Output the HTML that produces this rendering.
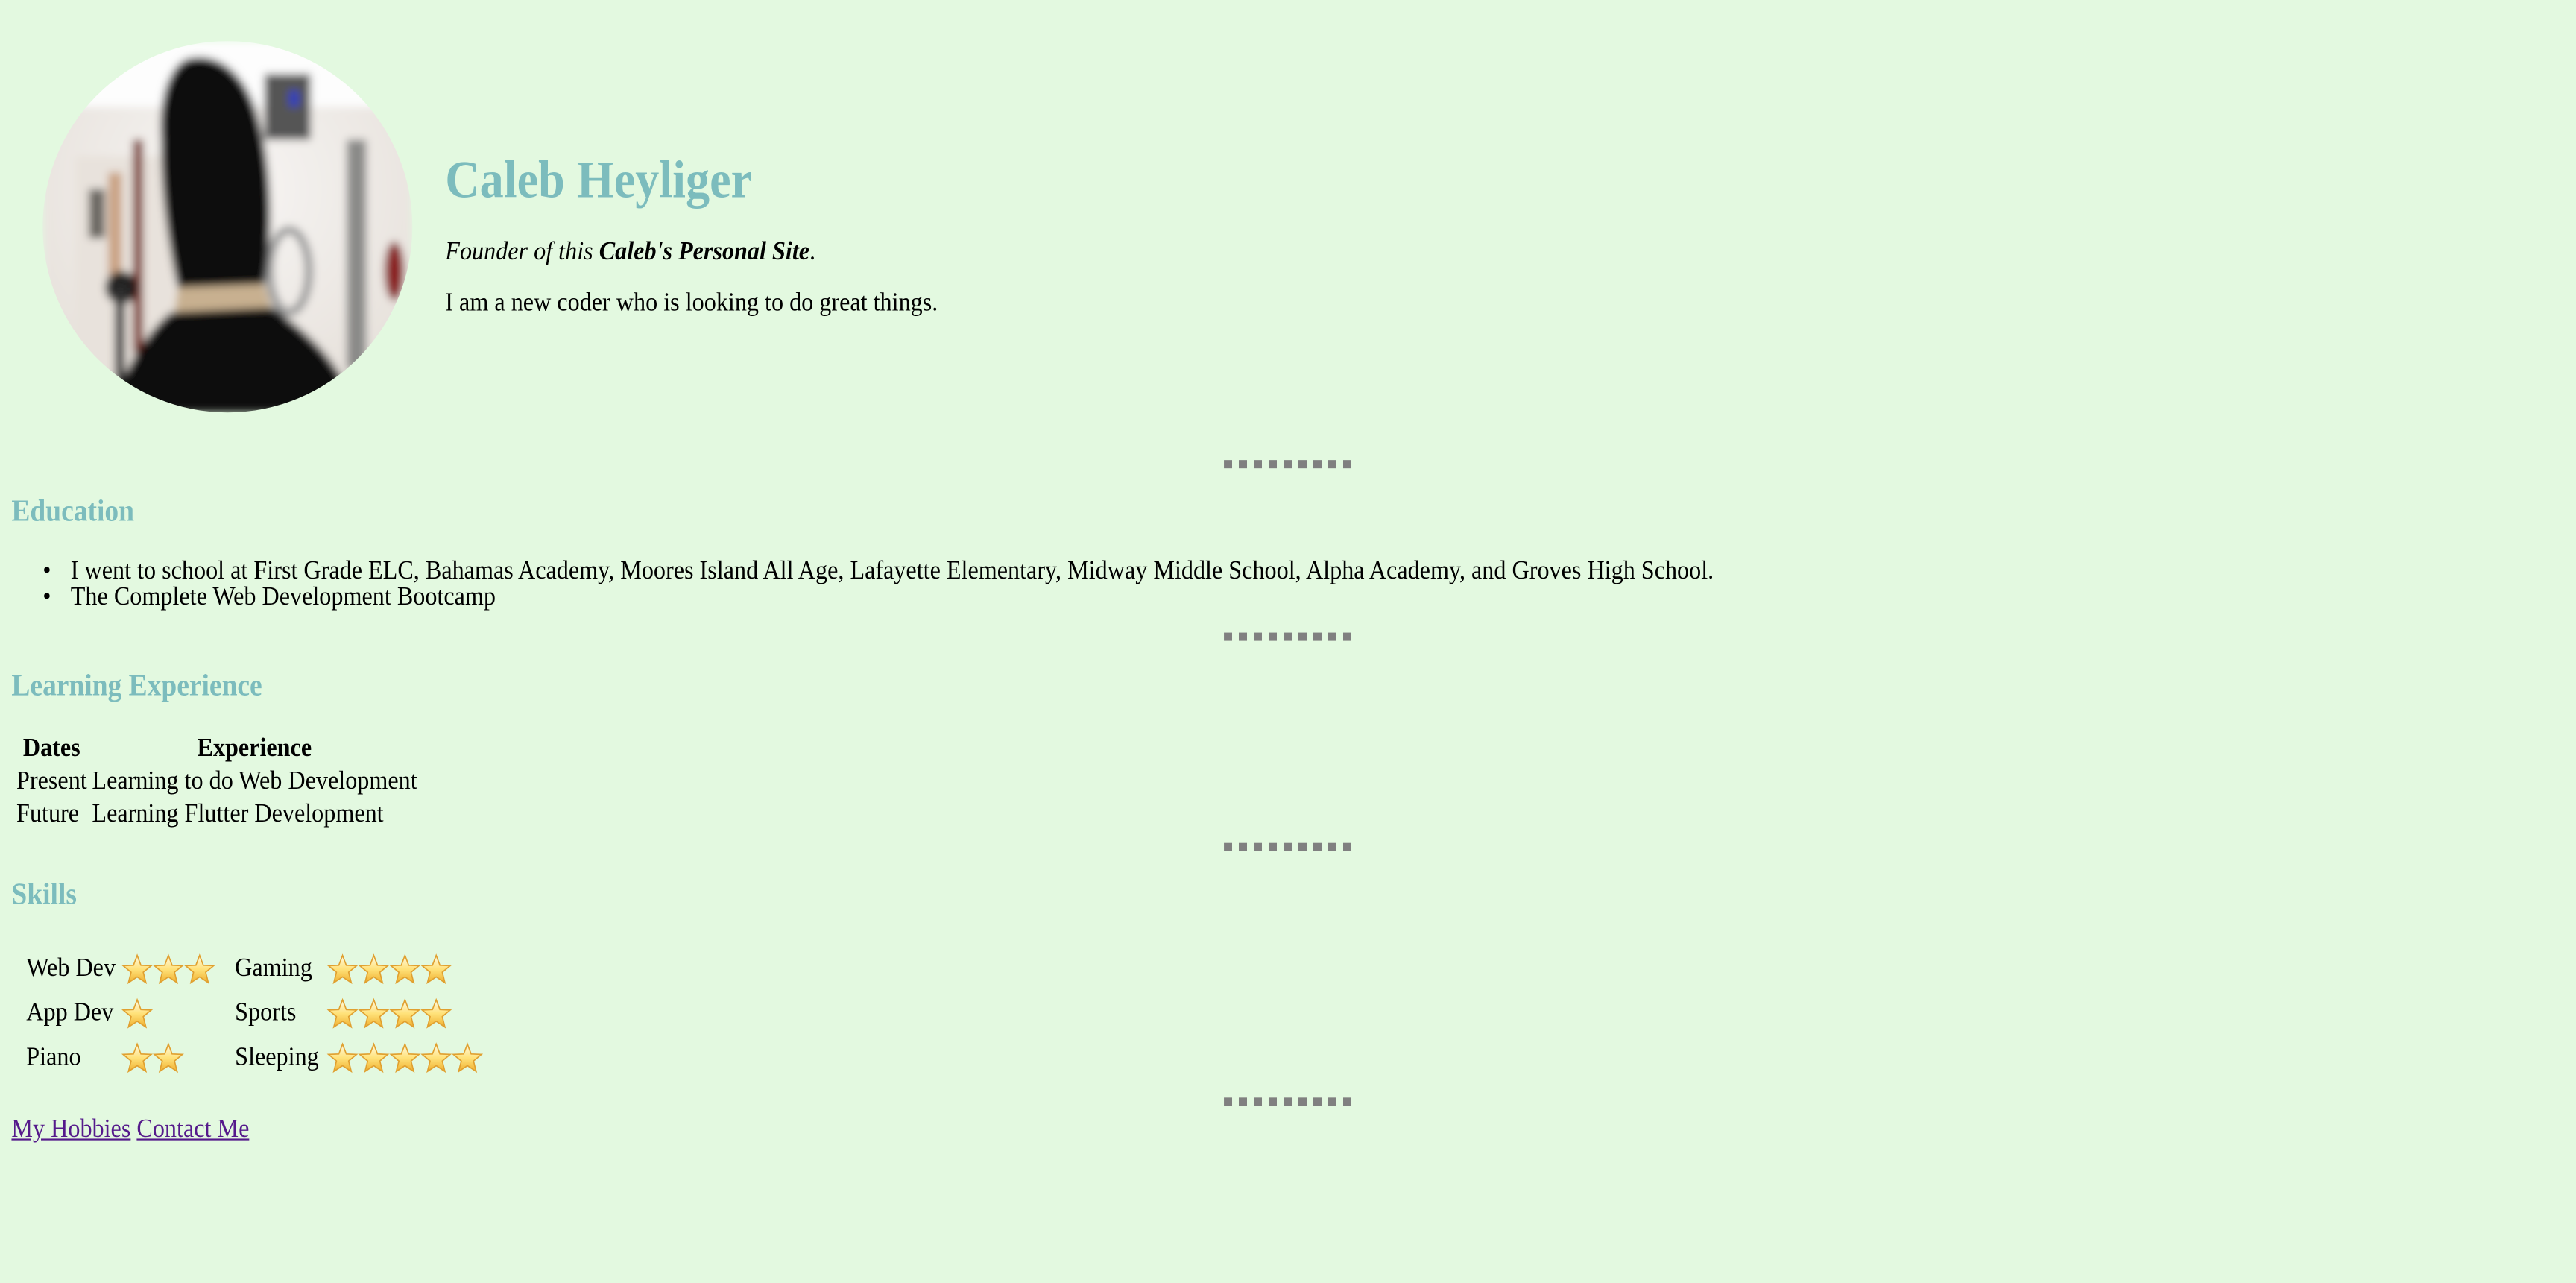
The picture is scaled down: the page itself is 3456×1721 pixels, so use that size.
<!DOCTYPE html>
<html><head><meta charset="utf-8"><style>
html,body{margin:0;padding:0;background:#e3f9e0;overflow:hidden;width:3456px;height:1720px}
#c{position:absolute;left:0;top:0;width:1568px;height:781px;transform:scale(2.2041);transform-origin:0 0;font-family:"Liberation Serif",serif;color:#000;font-size:16px}
.a{position:absolute;white-space:nowrap;line-height:18px;transform:scaleX(.912);transform-origin:0 0}
h1,h3{margin:0;color:#7cbcbd;font-weight:bold;position:absolute;white-space:nowrap;transform:scaleX(.91);transform-origin:0 0}
h1{font-size:32px;line-height:36px}
h3{font-size:18.7px;line-height:22px}
.hr{position:absolute;left:745px;width:77.6px;height:4.6px;background:repeating-linear-gradient(90deg,#808080 0 5px,transparent 5px 9.07px)}
.st{position:absolute}
a{color:#551a8b}
</style></head><body><div id="c">
<svg class="st" style="left:26px;top:25px" width="225" height="226" viewBox="0 0 225 226">
<defs><clipPath id="cl"><ellipse cx="112.5" cy="113" rx="112.5" ry="113"/></clipPath>
<filter id="bl"><feGaussianBlur stdDeviation="2.5"/></filter>
<radialGradient id="bg" cx="0.5" cy="0.4" r="0.7"><stop offset="0" stop-color="#f8f6f4"/><stop offset="1" stop-color="#e4ded8"/></radialGradient></defs>
<g clip-path="url(#cl)">
<g filter="url(#bl)">
<rect width="225" height="226" fill="url(#bg)"/>
<rect x="0" y="0" width="225" height="40" fill="#fdfdfd"/>
<rect x="20" y="70" width="60" height="150" fill="#e8e2dc"/>
<rect x="28" y="90" width="10" height="30" fill="#6a6660"/>
<rect x="40" y="80" width="8" height="70" fill="#c9a080"/>
<rect x="55" y="60" width="6" height="130" fill="#7a3028"/>
<circle cx="48" cy="150" r="10" fill="#222"/>
<rect x="44" y="150" width="6" height="76" fill="#333"/>
<rect x="135" y="20" width="28" height="40" fill="#555"/>
<rect x="150" y="30" width="6" height="10" fill="#3040c0"/>
<ellipse cx="150" cy="140" rx="12" ry="25" fill="none" stroke="#999" stroke-width="5"/>
<rect x="185" y="60" width="12" height="140" fill="#8a8a88"/>
<ellipse cx="214" cy="140" rx="6" ry="18" fill="#8a2020"/>
<path d="M92 10 C80 10 70 30 72 60 C72 100 78 130 82 150 L135 148 C140 120 140 80 132 50 C125 20 108 8 92 10Z" fill="#0c0a0a"/>
<path d="M82 150 L135 148 L140 165 L80 168Z" fill="#c8b090"/>
<path d="M78 165 L140 162 C165 180 185 200 190 226 L40 226 C50 200 62 178 78 165Z" fill="#0a0a0a"/>
</g></g></svg>
<h1 style="left:271px;top:91px">Caleb Heyliger</h1>
<div class="a" style="left:271px;top:145px"><i>Founder of this <b>Caleb's Personal Site</b></i>.</div>
<div class="a" style="left:271px;top:176px">I am a new coder who is looking to do great things.</div>

<div class="hr" style="top:280.4px"></div>
<h3 style="left:7px;top:301px">Education</h3>
<div class="a" style="left:26px;top:339px">•</div>
<div class="a" style="left:43px;top:339px">I went to school at First Grade ELC, Bahamas Academy, Moores Island All Age, Lafayette Elementary, Midway Middle School, Alpha Academy, and Groves High School.</div>
<div class="a" style="left:26px;top:355px">•</div>
<div class="a" style="left:43px;top:355px">The Complete Web Development Bootcamp</div>

<div class="hr" style="top:385px"></div>
<h3 style="left:7px;top:407px">Learning Experience</h3>
<div class="a" style="left:14px;top:447px"><b>Dates</b></div>
<div class="a" style="left:120px;top:447px"><b>Experience</b></div>
<div class="a" style="left:10px;top:467px">Present</div>
<div class="a" style="left:56px;top:467px">Learning to do Web Development</div>
<div class="a" style="left:10px;top:487px">Future</div>
<div class="a" style="left:56px;top:487px">Learning Flutter Development</div>

<div class="hr" style="top:513px"></div>
<h3 style="left:7px;top:534px">Skills</h3>
<svg width="0" height="0" style="position:absolute"><defs><linearGradient id="sg" x1="0" y1="0" x2="0" y2="1"><stop offset="0" stop-color="#fffbe8"/><stop offset="0.5" stop-color="#ffe27a"/><stop offset="1" stop-color="#f0b030"/></linearGradient>
<symbol id="s" viewBox="0 0 20 20"><path d="M10 1 L12.4 7.3 L19 7.6 L13.9 11.8 L15.6 18.5 L10 14.8 L4.4 18.5 L6.1 11.8 L1 7.6 L7.6 7.3Z" fill="url(#sg)" stroke="#e0a030" stroke-width="0.8"/></symbol></defs></svg>
<div class="a" style="left:16px;top:581px">Web Dev</div>
<div class="a" style="left:16px;top:608px">App Dev</div>
<div class="a" style="left:16px;top:635px">Piano</div>
<div class="a" style="left:143px;top:581px">Gaming</div>
<div class="a" style="left:143px;top:608px">Sports</div>
<div class="a" style="left:143px;top:635px">Sleeping</div>
<div class="st" style="left:74px;top:580px"><svg width="60" height="20"><use href="#s" x="0" width="19" height="20"/><use href="#s" x="19" width="19" height="20"/><use href="#s" x="38" width="19" height="20"/></svg></div>
<div class="st" style="left:74px;top:607px"><svg width="20" height="20"><use href="#s" width="19" height="20"/></svg></div>
<div class="st" style="left:74px;top:634px"><svg width="40" height="20"><use href="#s" width="19" height="20"/><use href="#s" x="19" width="19" height="20"/></svg></div>
<div class="st" style="left:199px;top:580px"><svg width="80" height="20"><use href="#s" width="19" height="20"/><use href="#s" x="19" width="19" height="20"/><use href="#s" x="38" width="19" height="20"/><use href="#s" x="57" width="19" height="20"/></svg></div>
<div class="st" style="left:199px;top:607px"><svg width="80" height="20"><use href="#s" width="19" height="20"/><use href="#s" x="19" width="19" height="20"/><use href="#s" x="38" width="19" height="20"/><use href="#s" x="57" width="19" height="20"/></svg></div>
<div class="st" style="left:199px;top:634px"><svg width="100" height="20"><use href="#s" width="19" height="20"/><use href="#s" x="19" width="19" height="20"/><use href="#s" x="38" width="19" height="20"/><use href="#s" x="57" width="19" height="20"/><use href="#s" x="76" width="19" height="20"/></svg></div>

<div class="hr" style="top:668px"></div>
<div class="a" style="left:7px;top:679px"><a href="#">My Hobbies</a> <a href="#">Contact Me</a></div>
</div></body></html>
